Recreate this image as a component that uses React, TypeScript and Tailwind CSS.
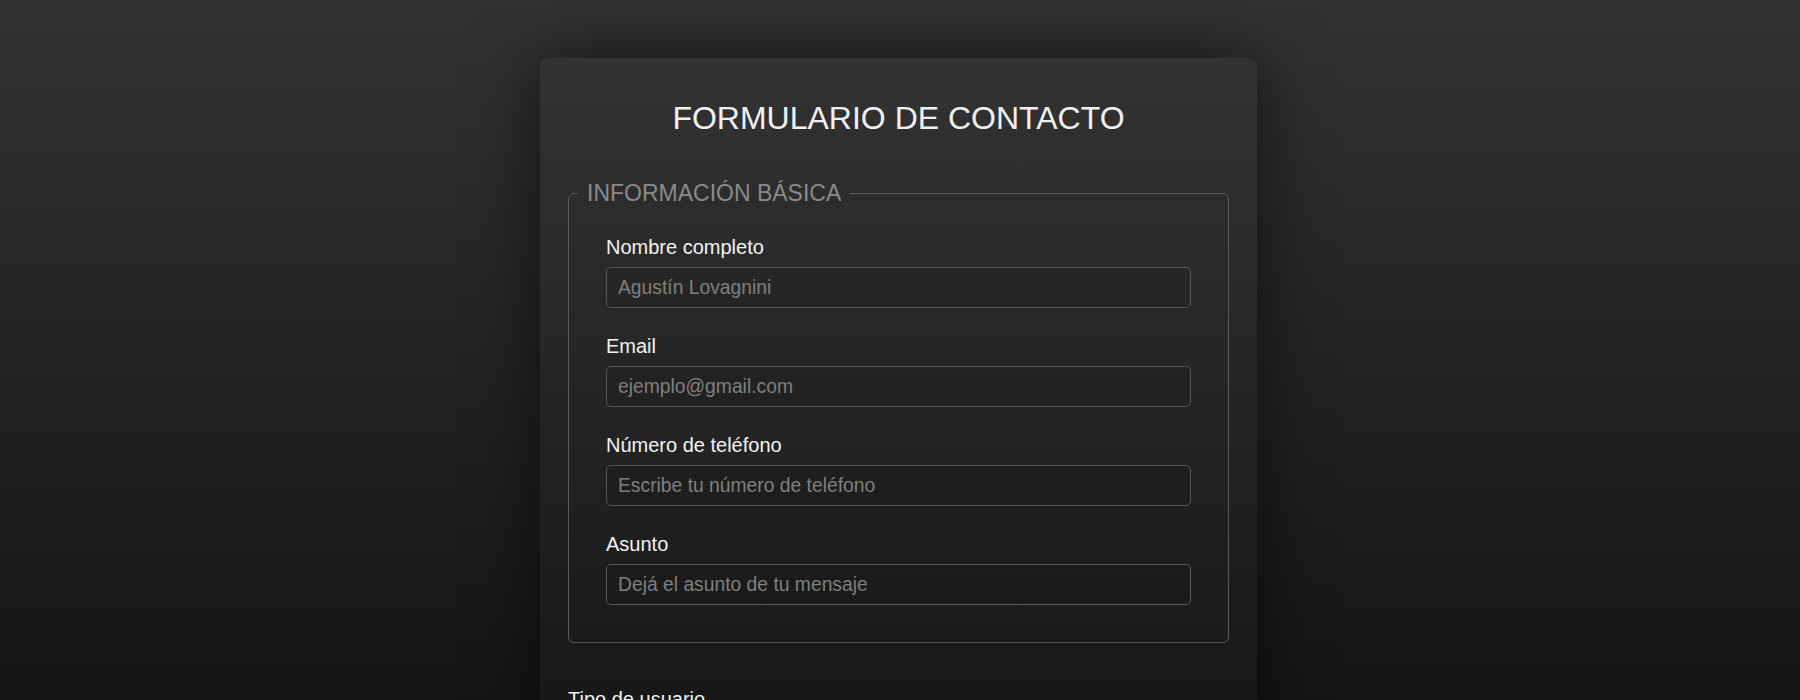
// Contact form page: dark gradient background, centered card with a
// fieldset of basic info inputs.

import { useState } from "react";

const font = { fontFamily: '"Liberation Sans", Arial, sans-serif' };

type Field = {
  id: string;
  label: string;
  type: string;
  placeholder: string;
};

const basicFields: Field[] = [
  { id: "nombre", label: "Nombre completo", type: "text", placeholder: "Agustín Lovagnini" },
  { id: "email", label: "Email", type: "email", placeholder: "ejemplo@gmail.com" },
  { id: "telefono", label: "Número de teléfono", type: "tel", placeholder: "Escribe tu número de teléfono" },
  { id: "asunto", label: "Asunto", type: "text", placeholder: "Dejá el asunto de tu mensaje" },
];

function TextField({ field, value, onChange }: { field: Field; value: string; onChange: (v: string) => void }) {
  return (
    <div className="flex flex-col gap-[8px]">
      <label htmlFor={field.id} className="text-[20px] leading-[23px] text-[#f2f2f2]">
        {field.label}
      </label>
      <input
        id={field.id}
        type={field.type}
        value={value}
        onChange={(e) => onChange(e.target.value)}
        placeholder={field.placeholder}
        className="h-[41px] w-full rounded-[5px] border border-[#575757] bg-[#00000010] px-[11px] text-[19.3px] text-[#e6e6e6] outline-none placeholder:text-[#7f7f7f] focus:border-[#8a8a8a]"
        style={font}
      />
    </div>
  );
}

export default function App() {
  const [values, setValues] = useState<Record<string, string>>({});
  const [tipo, setTipo] = useState("cliente");

  return (
    <div
      className="min-h-screen w-full bg-[linear-gradient(to_bottom,#323232,#151515)] bg-fixed pt-[58px] pr-[3px] pb-16"
      style={font}
    >
      <form
        onSubmit={(e) => e.preventDefault()}
        className="mx-auto w-[717px] rounded-[9px] bg-[#ffffff04] px-[28px] pt-[42px] pb-10 shadow-[0_0_70px_rgba(0,0,0,0.55)]"
      >
        <h1 className="mb-[43px] text-center text-[32px] leading-[37px] text-[#f0f0f0]">
          FORMULARIO DE CONTACTO
        </h1>

        <fieldset className="rounded-[6px] border border-[#5a5a5a] px-[9px]">
          <legend className="px-[9px] text-[23px] leading-[26px] text-[#8a8a8a]">
            INFORMACIÓN BÁSICA
          </legend>
          <div className="flex flex-col gap-[27px] px-[28px] pt-[30px] pb-[37px]">
            {basicFields.map((f) => (
              <TextField
                key={f.id}
                field={f}
                value={values[f.id] ?? ""}
                onChange={(v) => setValues((s) => ({ ...s, [f.id]: v }))}
              />
            ))}
          </div>
        </fieldset>

        <div className="mt-[45px] flex flex-col gap-3">
          <span className="text-[20px] leading-[23px] text-[#f2f2f2]">Tipo de usuario</span>
          <div className="flex gap-6 text-[18px] text-[#d0d0d0]">
            {["cliente", "proveedor", "otro"].map((t) => (
              <label key={t} className="inline-flex items-center gap-2 capitalize">
                <input
                  type="radio"
                  name="tipo"
                  checked={tipo === t}
                  onChange={() => setTipo(t)}
                />
                {t}
              </label>
            ))}
          </div>
        </div>
      </form>
    </div>
  );
}
